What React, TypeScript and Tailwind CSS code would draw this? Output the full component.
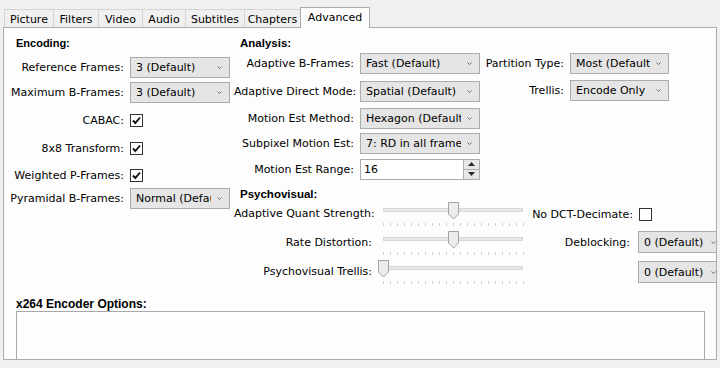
import React from "react";

const Chevron = () => (
  <svg width="5" height="3" viewBox="0 0 5 3" className="shrink-0">
    <path d="M0.5 0.5 L2.5 2.5 L4.5 0.5" fill="none" stroke="#6d6d6d" strokeWidth="1" />
  </svg>
);

function Select({ text, className }: { text: string; className: string }) {
  return (
    <div
      className={`flex items-center shrink-0 border border-[#acacac] bg-[#e5e5e5] pl-[5px] pr-[7px] ${className}`}
    >
      <span className="flex-1 min-w-0 overflow-hidden whitespace-nowrap mr-[6px] pt-[2px]">{text}</span>
      <Chevron />
    </div>
  );
}

function Check({ checked }: { checked: boolean }) {
  return (
    <div className="w-[13px] h-[13px] shrink-0 border border-[#333333] bg-white flex items-center justify-center">
      {checked && (
        <svg width="11" height="11" viewBox="0 0 11 11">
          <path d="M2 5.5 L4.3 8 L9 2.5" fill="none" stroke="#111" strokeWidth="1.9" />
        </svg>
      )}
    </div>
  );
}

function Thumb() {
  return (
    <svg width="11" height="18" viewBox="0 0 11 18">
      <path
        d="M0.5 0.5 H10.5 V12 L5.5 17 L0.5 12 Z"
        fill="#ececec"
        stroke="#a3a3a3"
        strokeWidth="1"
      />
    </svg>
  );
}

function Slider({ value }: { value: number }) {
  const ticks = Array.from({ length: 21 });
  return (
    <div className="relative w-[140px] h-[26px] shrink-0">
      <div className="absolute left-0 right-0 top-[6px] h-[4px] bg-[#e7e7e7] border border-[#d8d8d8]" />
      <div className="absolute left-0 right-[-1px] top-[21px] h-[3px] flex justify-between">
        {ticks.map((_, i) => (
          <div key={i} className="w-px h-[3px] bg-[#cfcfcf]" />
        ))}
      </div>
      <div className="absolute top-0" style={{ left: value * 140 - 5 }}>
        <Thumb />
      </div>
    </div>
  );
}

function Row({
  label,
  lw,
  children,
  className = "",
}: {
  label: string;
  lw: string;
  children: React.ReactNode;
  className?: string;
}) {
  return (
    <div className={`flex items-center gap-[6px] ${className}`}>
      <div className={`${lw} shrink-0 text-right whitespace-nowrap pt-[2px]`}>{label}</div>
      {children}
    </div>
  );
}

const Heading = ({ text, className }: { text: string; className: string }) => (
  <div
    className={`h-[14px] leading-[14px] font-bold font-['Liberation_Sans',Arial,sans-serif] whitespace-nowrap ${className}`}
  >
    {text}
  </div>
);

function Spinner() {
  return (
    <div className="flex h-[21px] w-[120px] shrink-0 border border-[#acacac] bg-white">
      <div className="flex-1 pl-[3px] pt-[2px] flex items-center">16</div>
      <div className="w-[17px] flex flex-col -my-px -mr-px">
        <div className="h-[11px] border border-[#adadad] bg-[#e6e6e6] flex items-center justify-center">
          <svg width="7" height="4" viewBox="0 0 7 4">
            <path d="M0 4 L3.5 0 L7 4 Z" fill="#2b2b2b" />
          </svg>
        </div>
        <div className="h-[11px] border border-t-0 border-[#adadad] bg-[#e6e6e6] flex items-center justify-center">
          <svg width="7" height="4" viewBox="0 0 7 4">
            <path d="M0 0 L7 0 L3.5 4 Z" fill="#2b2b2b" />
          </svg>
        </div>
      </div>
    </div>
  );
}

const tabs = [
  { t: "Picture", w: "w-[50px]" },
  { t: "Filters", w: "w-[46px]" },
  { t: "Video", w: "w-[45px]" },
  { t: "Audio", w: "w-[44px]" },
  { t: "Subtitles", w: "w-[60px]" },
  { t: "Chapters", w: "w-[57px]" },
];

export default function App() {
  return (
    <div className="w-[720px] h-[368px] bg-[#f0f0f0] overflow-hidden text-[11px] text-black font-['DejaVu_Sans',sans-serif]">
      {/* tabs */}
      <div className="h-[27px] flex items-end pl-[4px]">
        {tabs.map((tab, i) => (
          <div
            key={tab.t}
            className={`${tab.w} h-[18px] border border-b-0 border-[#d4d4d4] bg-[#f0f0f0] flex items-center justify-center pt-[4px] ${
              i === 0 ? "" : "-ml-px"
            }`}
          >
            {tab.t}
          </div>
        ))}
        <div className="w-[70px] h-[21px] -ml-px -mb-px relative z-10 border border-b-0 border-[#acacac] bg-[#fdfdfd] flex items-center justify-center pt-[1px]">
          Advanced
        </div>
      </div>

      {/* panel */}
      <div className="mx-[3px] h-[333px] border border-[#acacac] bg-[#fdfdfd] overflow-hidden flex flex-col">
        <div className="flex">
          {/* Encoding column */}
          <div className="w-[230px] shrink-0 flex flex-col">
            <Heading text="Encoding:" className="mt-[8px] pl-[12px] text-[11px]" />
            <Row label="Reference Frames:" lw="w-[120px]" className="mt-[7px]">
              <Select text="3 (Default)" className="w-[100px] h-[21px]" />
            </Row>
            <Row label="Maximum B-Frames:" lw="w-[120px]" className="mt-[4px]">
              <Select text="3 (Default)" className="w-[100px] h-[21px]" />
            </Row>
            <Row label="CABAC:" lw="w-[120px]" className="mt-[7px] h-[20px]">
              <Check checked />
            </Row>
            <Row label="8x8 Transform:" lw="w-[120px]" className="mt-[8px] h-[20px]">
              <Check checked />
            </Row>
            <Row label="Weighted P-Frames:" lw="w-[120px]" className="mt-[7px] h-[20px]">
              <Check checked />
            </Row>
            <Row label="Pyramidal B-Frames:" lw="w-[120px]" className="mt-[3px]">
              <Select text="Normal (Default)" className="w-[100px] h-[21px]" />
            </Row>
          </div>

          {/* right area */}
          <div className="flex-1 min-w-0 flex flex-col">
            <div className="flex">
              {/* Analysis */}
              <div className="w-[246px] shrink-0 flex flex-col">
                <Heading text="Analysis:" className="mt-[8px] pl-[6px] text-[11.5px]" />
                <Row label="Adaptive B-Frames:" lw="w-[120px]" className="mt-[3px]">
                  <Select text="Fast (Default)" className="w-[120px] h-[21px]" />
                </Row>
                <Row label="Adaptive Direct Mode:" lw="w-[120px]" className="mt-[7px]">
                  <Select text="Spatial (Default)" className="w-[120px] h-[21px]" />
                </Row>
                <Row label="Motion Est Method:" lw="w-[120px]" className="mt-[6px]">
                  <Select text="Hexagon (Default)" className="w-[120px] h-[21px]" />
                </Row>
                <Row label="Subpixel Motion Est:" lw="w-[120px]" className="mt-[4px]">
                  <Select text="7: RD in all frames" className="w-[120px] h-[21px]" />
                </Row>
                <Row label="Motion Est Range:" lw="w-[120px]" className="mt-[5px]">
                  <Spinner />
                </Row>
              </div>
              {/* Partition column */}
              <div className="flex flex-col">
                <Row label="Partition Type:" lw="w-[84px]" className="mt-[25px]">
                  <Select text="Most (Default)" className="w-[99px] h-[21px]" />
                </Row>
                <Row label="Trellis:" lw="w-[84px]" className="mt-[6px]">
                  <Select text="Encode Only" className="w-[99px] h-[21px]" />
                </Row>
              </div>
            </div>

            <Heading text="Psychovisual:" className="mt-[7px] pl-[6px] text-[11.5px]" />

            <div className="mt-[1px] flex flex-col">
              <div className="flex items-start h-[29px]">
                <div className="w-[138px] shrink-0 text-right whitespace-nowrap pt-[5px] leading-[14px]">
                  Adaptive Quant Strength:
                </div>
                <div className="ml-[11px]">
                  <Slider value={0.5} />
                </div>
                <div className="mt-[3px] flex items-center shrink-0">
                  <div className="w-[110px] text-right whitespace-nowrap pt-[2px]">No DCT-Decimate:</div>
                  <div className="ml-[6px]">
                    <Check checked={false} />
                  </div>
                </div>
              </div>
              <div className="flex items-start h-[29px]">
                <div className="w-[138px] shrink-0 text-right whitespace-nowrap pt-[5px] leading-[14px]">
                  Rate Distortion:
                </div>
                <div className="ml-[11px]">
                  <Slider value={0.5} />
                </div>
                <div className="flex items-center shrink-0">
                  <div className="w-[107px] text-right whitespace-nowrap pt-[2px]">Deblocking:</div>
                  <div className="ml-[8px]">
                    <Select text="0 (Default)" className="w-[86px] h-[22px]" />
                  </div>
                </div>
              </div>
              <div className="flex items-start h-[29px]">
                <div className="w-[138px] shrink-0 text-right whitespace-nowrap pt-[5px] leading-[14px]">
                  Psychovisual Trellis:
                </div>
                <div className="ml-[11px]">
                  <Slider value={0} />
                </div>
                <div className="mt-[1px] flex items-center shrink-0">
                  <div className="w-[107px]" />
                  <div className="ml-[8px]">
                    <Select text="0 (Default)" className="w-[86px] h-[22px]" />
                  </div>
                </div>
              </div>
            </div>
          </div>
        </div>

        <Heading text="x264 Encoder Options:" className="mt-[8px] pl-[12px] text-[12px]" />
        <div className="ml-[12px] w-[689px] h-[60px] shrink-0 border border-[#a9a9a9] bg-[#fdfdfd]" />
      </div>
    </div>
  );
}
